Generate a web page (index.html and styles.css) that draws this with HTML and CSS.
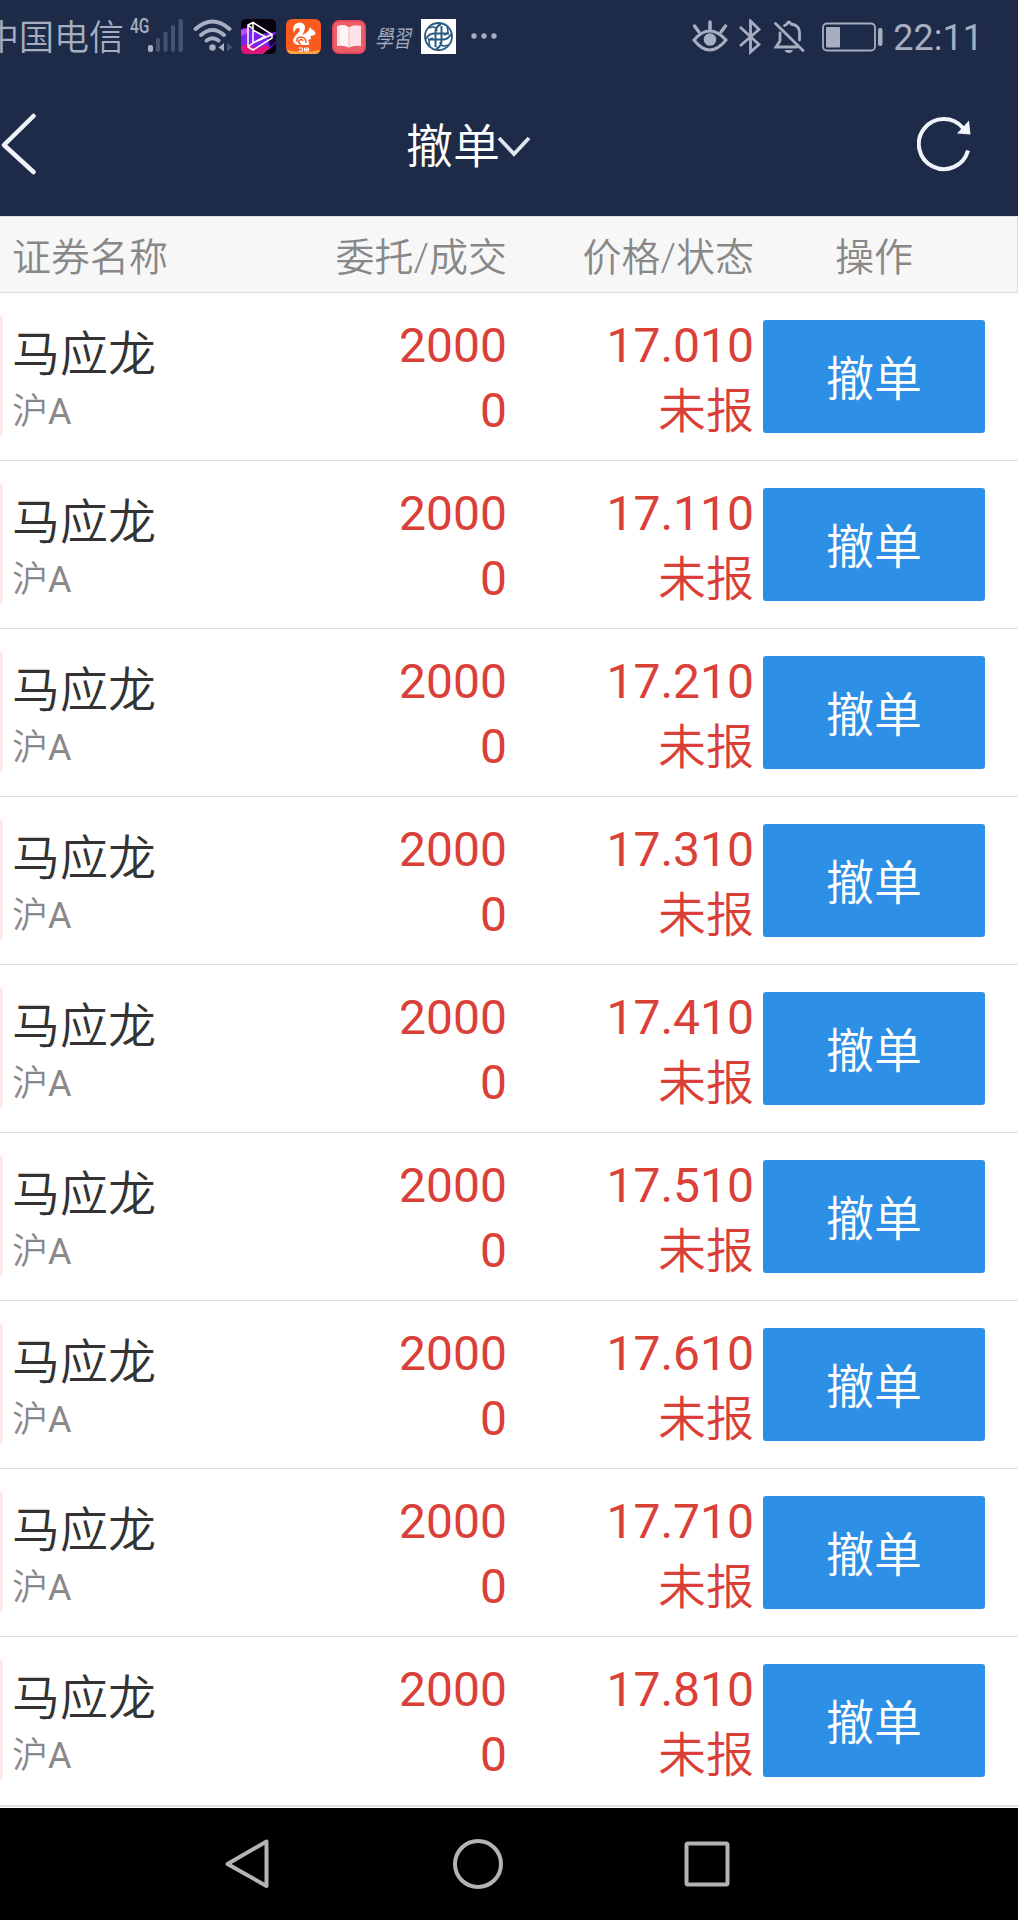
FILE: index.html
```html
<!DOCTYPE html>
<html lang="zh-CN">
<head>
    <meta charset="UTF-8">
    <meta name="viewport" content="width=device-width, initial-scale=1.0">
    <title>撤单</title>
    <link rel="stylesheet" href="styles.css">
</head>
<body>
    <div class="status-bar">
        <span class="carrier">中国电信</span>
        <span class="net">4G</span>
        <svg class="signal" width="36" height="34" viewBox="0 0 36 34">
            <rect x="0" y="26" width="5" height="7" rx="2" fill="#a6aec0"/>
            <g fill="#46536e">
                <rect x="8" y="19" width="4" height="14" rx="2"/>
                <rect x="15.500" y="12.500" width="4" height="20.500" rx="2"/>
                <rect x="23" y="6" width="4" height="27" rx="2"/>
                <rect x="30.500" y="0" width="4.500" height="33" rx="2"/>
            </g>
        </svg>
        <svg class="wifi" width="40" height="34" viewBox="0 0 40 34">
            <g fill="none" stroke="#a6aec0" stroke-width="4" stroke-linecap="round">
                <path d="M2.500 10Q19.500 -5 36.500 10"/>
                <path d="M8 16Q19.500 6 31 16"/>
                <path d="M13.500 21.500Q19.500 17 25.500 21.500"/>
            </g>
            <circle cx="19.500" cy="28.500" r="3.200" fill="#a6aec0"/>
            <path d="M31 24V32.500L25.500 28.500Z" fill="#a6aec0"/>
            <path d="M34 24V32.500L39.500 28Z" fill="#46536e"/>
        </svg>
        <svg class="app-icon video" width="35" height="35" viewBox="0 0 35 35">
            <rect width="35" height="35" rx="5" fill="#08020f"/>
            <path d="M0 10L8 8L14 13L20 15L35 13V24L27 31L0 29Z" fill="#7a22ee"/>
            <path d="M0 11L8 9L7 14L0 17Z" fill="#c04bf0"/>
            <path d="M0 27L8 25L15 30L24 26L29 29L22 35H5Q0 35 0 30Z" fill="#e0147c"/>
            <path d="M27 19L35 15V23L29 28Z" fill="#14072c"/>
            <path d="M7 6L12 3.500L31 15.500V19L12 31L7 28ZM12 3.500V24L31 15.500M7 28L12 24M12 11L24 17.500L12 24M7 6L12 10" fill="none" stroke="#fff" stroke-width="1.500" stroke-linejoin="round"/>
        </svg>
        <svg class="app-icon squirrel" width="35" height="35" viewBox="0 0 35 35">
            <rect width="35" height="35" rx="6" fill="#fb5a1e"/>
            <path d="M1 31Q17 34 34 31Q33 35 29 35H6Q2 35 1 31Z" fill="#fda63c"/>
            <path d="M8 14Q5 5 13 3.500Q19 3.500 19 9Q18.500 13 16 16Q21 14 23 11L24 8L26 10.500Q29.500 12 29.500 15Q27 17 24.500 17L25 20L22 21Q23.500 23 23 26H12Q7 25 7 21Q8 17 12 14Q15 11 13 9Q9 9 8 14Z" fill="#fff"/>
            <path d="M11 23Q10 18 15 18Q20 18 20 24M15 25A2.200 2.200 0 1 1 17 22" fill="none" stroke="#fb5a1e" stroke-width="1.500"/>
            <path d="M12.500 29H16.500V32H12.500M18.500 29H22.500V32H18.500ZM18.500 30.500H22.500" fill="none" stroke="#fff" stroke-width="1"/>
        </svg>
        <svg class="app-icon book" width="34" height="34" viewBox="0 0 34 34">
            <rect width="34" height="34" rx="7" fill="#df4458"/>
            <rect x="1.500" y="1.500" width="31" height="31" rx="6" fill="#ef5d69"/>
            <path d="M5 6Q12 4 17 7.500Q22 4 29 6V26Q22 25 17 27.500Q12 25 5 26Z" fill="#fde3e7"/>
            <path d="M17 7.500Q12 4 8 5.500V25Q13 24.500 17 27.500Z" fill="#fff4f5"/>
            <path d="M17 7V27" stroke="#f3b3bc" stroke-width="1"/>
        </svg>
        <span class="study">學習</span>
        <svg class="app-icon fund" width="35" height="35" viewBox="0 0 35 35">
            <rect width="35" height="35" fill="#fff"/>
            <g fill="none" stroke="#2a5a80" stroke-width="2">
                <circle cx="17.500" cy="17.500" r="13.500" stroke-width="1.800"/>
                <path d="M14.500 28V14Q14 8 20 5M20.500 7V21Q21 27 15 30M7 20.500H21Q27 21 30 15M28 14.500H14Q8 14 5 20"/>
                <path d="M8 9Q15 6 16 12M27 26Q20 29 19 23M9 27Q6 20 12 19M26 8Q29 15 23 16" stroke-width="1.600"/>
            </g>
        </svg>
        <svg class="more" width="26" height="6" viewBox="0 0 26 6">
            <g fill="#a6aec0"><circle cx="3" cy="3" r="2.700"/><circle cx="13" cy="3" r="2.700"/><circle cx="23" cy="3" r="2.700"/></g>
        </svg>
        <div class="status-right">
            <svg class="eye" width="36" height="33" viewBox="0 0 36 33">
                <path d="M2 20Q17.500 2 34 20Q17.500 40 2 20Z" fill="none" stroke="#a6aec0" stroke-width="3"/>
                <circle cx="18" cy="19.500" r="6.300" fill="#a6aec0"/>
                <path d="M18 2V9M2.500 6L7 12M33.500 6L29 12" stroke="#a6aec0" stroke-width="3.500" stroke-linecap="round"/>
            </svg>
            <svg class="bluetooth" width="22" height="36" viewBox="0 0 22 36">
                <path d="M1 8L20 25.500L11.500 33V2L20 10.500L1 27" fill="none" stroke="#a6aec0" stroke-width="2.800"/>
            </svg>
            <svg class="bell" width="31" height="34" viewBox="0 0 31 34">
                <g fill="none" stroke="#a6aec0" stroke-width="2.800" stroke-linecap="round">
                    <path d="M1.500 3.500L29 30.500"/>
                    <path d="M6 13V21L2 27H23"/>
                    <path d="M10.500 5.500Q12 5 13 4Q14.500 0 17 4Q25 5 25.500 12V20"/>
                </g>
                <path d="M10.500 30H19Q18 33 15 33Q11.500 33 10.500 30Z" fill="#a6aec0"/>
            </svg>
            <svg class="battery" width="61" height="30" viewBox="0 0 61 30">
                <rect x="1" y="1.500" width="52" height="27" rx="4" fill="none" stroke="#a6aec0" stroke-width="1.800"/>
                <rect x="4" y="5" width="14" height="20.500" rx="1" fill="#a6aec0"/>
                <rect x="56" y="6" width="4.500" height="18" rx="2" fill="#a6aec0"/>
            </svg>
            <span class="clock">22:11</span>
        </div>
    </div>

    <header class="title-bar">
        <svg class="back" width="36" height="62" viewBox="0 0 36 62">
            <path d="M33.500 3L4 32L33.500 59" fill="none" stroke="#f0f3fa" stroke-width="4.500" stroke-linecap="round" stroke-linejoin="round"/>
        </svg>
        <h1 class="title">撤单
            <svg class="caret" width="34" height="22" viewBox="0 0 34 22">
                <path d="M2 2L17 18L32 2" fill="none" stroke="#dfe4ef" stroke-width="3.800"/>
            </svg>
        </h1>
        <svg class="refresh" width="56" height="56" viewBox="0 0 56 56">
            <path d="M51 34.500A25 25 0 1 1 46 12" fill="none" stroke="#f0f3fa" stroke-width="4"/>
            <path d="M40 17.500L52 4.500L53.500 18.500Z" fill="#f0f3fa"/>
        </svg>
    </header>

    <div class="grid table-head">
        <span>证券名称</span>
        <span class="right">委托/成交</span>
        <span class="right">价格/状态</span>
        <span class="action-title">操作</span>
    </div>

    <main class="orders">
        <div class="grid order">
            <div><p class="name">马应龙</p><p class="market">沪<span>A</span></p></div>
            <div class="right red"><p>2000</p><p>0</p></div>
            <div class="right red"><p>17.010</p><p class="state">未报</p></div>
            <button class="cancel-btn">撤单</button>
        </div>
        <div class="grid order">
            <div><p class="name">马应龙</p><p class="market">沪<span>A</span></p></div>
            <div class="right red"><p>2000</p><p>0</p></div>
            <div class="right red"><p>17.110</p><p class="state">未报</p></div>
            <button class="cancel-btn">撤单</button>
        </div>
        <div class="grid order">
            <div><p class="name">马应龙</p><p class="market">沪<span>A</span></p></div>
            <div class="right red"><p>2000</p><p>0</p></div>
            <div class="right red"><p>17.210</p><p class="state">未报</p></div>
            <button class="cancel-btn">撤单</button>
        </div>
        <div class="grid order">
            <div><p class="name">马应龙</p><p class="market">沪<span>A</span></p></div>
            <div class="right red"><p>2000</p><p>0</p></div>
            <div class="right red"><p>17.310</p><p class="state">未报</p></div>
            <button class="cancel-btn">撤单</button>
        </div>
        <div class="grid order">
            <div><p class="name">马应龙</p><p class="market">沪<span>A</span></p></div>
            <div class="right red"><p>2000</p><p>0</p></div>
            <div class="right red"><p>17.410</p><p class="state">未报</p></div>
            <button class="cancel-btn">撤单</button>
        </div>
        <div class="grid order">
            <div><p class="name">马应龙</p><p class="market">沪<span>A</span></p></div>
            <div class="right red"><p>2000</p><p>0</p></div>
            <div class="right red"><p>17.510</p><p class="state">未报</p></div>
            <button class="cancel-btn">撤单</button>
        </div>
        <div class="grid order">
            <div><p class="name">马应龙</p><p class="market">沪<span>A</span></p></div>
            <div class="right red"><p>2000</p><p>0</p></div>
            <div class="right red"><p>17.610</p><p class="state">未报</p></div>
            <button class="cancel-btn">撤单</button>
        </div>
        <div class="grid order">
            <div><p class="name">马应龙</p><p class="market">沪<span>A</span></p></div>
            <div class="right red"><p>2000</p><p>0</p></div>
            <div class="right red"><p>17.710</p><p class="state">未报</p></div>
            <button class="cancel-btn">撤单</button>
        </div>
        <div class="grid order">
            <div><p class="name">马应龙</p><p class="market">沪<span>A</span></p></div>
            <div class="right red"><p>2000</p><p>0</p></div>
            <div class="right red"><p>17.810</p><p class="state">未报</p></div>
            <button class="cancel-btn">撤单</button>
        </div>
    </main>

    <footer class="nav-bar">
        <svg width="50" height="52" viewBox="0 0 50 52">
            <path d="M42.500 3.500V48L3.500 26Z" fill="none" stroke="#b4b4b4" stroke-width="4" stroke-linejoin="round"/>
        </svg>
        <svg width="50" height="52" viewBox="0 0 50 52">
            <circle cx="25" cy="26" r="23" fill="none" stroke="#b4b4b4" stroke-width="4"/>
        </svg>
        <svg width="50" height="52" viewBox="0 0 50 52">
            <rect x="4.500" y="5.500" width="41" height="41" rx="1.500" fill="none" stroke="#b4b4b4" stroke-width="4"/>
        </svg>
    </footer>
</body>
</html>
```
FILE: styles.css
```css
* {
    box-sizing: border-box;
}
body {
    font-family: Roboto, "Noto Sans CJK SC", sans-serif;
    margin: 0;
    width: 1018px;
    height: 1920px;
    overflow: hidden;
    background: #fff;
    color: #333;
}
p, h1 {
    margin: 0;
    font-weight: normal;
}
svg {
    display: block;
    flex: none;
}

/* status bar */
.status-bar {
    display: flex;
    align-items: flex-start;
    height: 74px;
    background: #1d2b48;
    color: #a6aec0;
    white-space: nowrap;
}
.carrier {
    width: 140px;
    margin: 19px 0 0 -16px;
    font-size: 35px;
    line-height: 40px;
    font-weight: 350;
}
.net {
    width: 24px;
    margin: 16px 0 0 6px;
    font-size: 20px;
    line-height: 21px;
    font-weight: 500;
    transform: scaleX(0.78);
    transform-origin: left;
}
.signal {
    margin-top: 19px;
    margin-left: -6px;
}
.wifi {
    margin: 19px 0 0 9px;
}
.app-icon {
    margin-top: 19px;
}
.video {
    margin-left: 8px;
}
.squirrel {
    margin-left: 10px;
}
.book {
    margin: 20px 0 0 11px;
}
.study {
    width: 35px;
    margin: 23px 0 0 9px;
    font: italic 350 18px/28px "Noto Sans CJK TC", sans-serif;
    transform: scaleY(1.3);
}
.fund {
    margin-left: 11px;
}
.more {
    margin: 33px 0 0 15px;
}
.status-right {
    display: flex;
    margin-left: auto;
    padding-right: 35px;
}
.eye {
    margin-top: 20px;
}
.bluetooth {
    margin: 19px 0 0 11px;
}
.bell {
    margin: 20px 0 0 13px;
}
.battery {
    margin: 22px 0 0 17px;
}
.clock {
    margin: 17px 0 0 10px;
    font-size: 36px;
    line-height: 42px;
}

/* title */
.title-bar {
    display: flex;
    align-items: flex-start;
    height: 142px;
    background: #1d2b48;
    color: #fff;
}
.back {
    margin-top: 39px;
}
.title {
    display: flex;
    margin: 43px 0 0 370px;
    font-size: 47px;
    line-height: 60px;
    font-weight: 350;
}
.caret {
    margin: 19px 0 0 -3px;
}
.refresh {
    margin: 42px 45px 0 auto;
}

/* table */
.grid {
    display: grid;
    grid-template-columns: 245px 250px 247px 230px;
    padding-left: 12px;
}
.right {
    text-align: right;
}
.table-head {
    height: 77px;
    border: 1px solid #dedfe2;
    border-left: 0;
    background: #f7f7f7;
    color: #888;
    font-size: 39px;
    line-height: 82px;
    font-weight: 350;
}
.action-title {
    padding-left: 81px;
}
.order {
    position: relative;
    height: 168px;
    border-bottom: 1px solid #dfdfdf;
    padding-top: 28px;
}
.order:last-child {
    height: 170px;
    border-bottom-width: 2px;
}
/* pink tab peeking in from the left edge */
.order::before {
    content: "";
    position: absolute;
    left: 0;
    top: 22px;
    width: 3px;
    height: 121px;
    border-radius: 0 3px 3px 0;
    background: #fdeae8;
}
.name {
    margin-top: 4px;
    font-size: 48px;
    line-height: 60px;
    font-weight: 350;
}
.market {
    margin-top: 2px;
    font-size: 36px;
    line-height: 50px;
    color: #888;
    font-weight: 350;
}
.market span {
    font-weight: 400;
}
.red {
    color: #da4037;
    font-size: 48px;
    line-height: 50px;
}
.red p {
    height: 65px;
}
.red .state {
    padding-top: 1px;
    font-weight: 350;
}
.cancel-btn {
    width: 222px;
    height: 113px;
    margin: -1px 0 0 9px;
    padding: 0 0 3px 0;
    border: 0;
    border-radius: 3px;
    background: #2d8fe5;
    color: #fff;
    font: 350 48px/60px "Noto Sans CJK SC", sans-serif;
}

/* android buttons */
.nav-bar {
    display: flex;
    gap: 179px;
    height: 112px;
    margin-top: 1px;
    padding: 30px 0 0 224px;
    background: #000;
}
```
